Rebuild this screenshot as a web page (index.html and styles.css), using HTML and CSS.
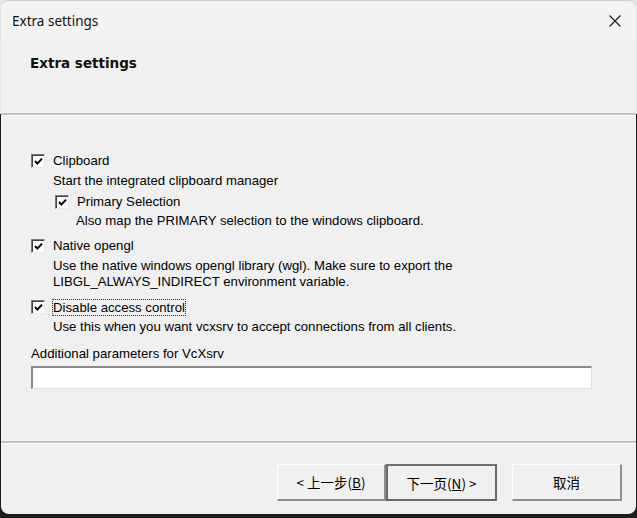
FILE: index.html
```html
<!DOCTYPE html>
<html>
<head>
<meta charset="utf-8">
<link rel="stylesheet" href="styles.css">
</head>
<body>
<div class="window">
  <div class="titlebar">
    <span class="title">Extra settings</span>
    <svg class="close" width="12" height="12" viewBox="0 0 12 12"><path d="M0.5 0.5L11.5 11.5M11.5 0.5L0.5 11.5" stroke="#1a1a1a" stroke-width="1.1" fill="none"/></svg>
  </div>
  <div class="header">Extra settings</div>
  <div class="sep"></div>
  <div class="content">
    <div class="opt first">
      <span class="cb"><svg width="9" height="9" viewBox="0 0 9 9"><path d="M1 4L3.4 6.6L8 1.6" stroke="#000" stroke-width="2" fill="none"/></svg></span>
      <span>Clipboard</span>
    </div>
    <div class="desc">Start the integrated clipboard manager</div>
    <div class="sub">
      <div class="opt nested">
        <span class="cb"><svg width="9" height="9" viewBox="0 0 9 9"><path d="M1 4L3.4 6.6L8 1.6" stroke="#000" stroke-width="2" fill="none"/></svg></span>
        <span>Primary Selection</span>
      </div>
      <div class="desc subdesc">Also map the PRIMARY selection to the windows clipboard.</div>
    </div>
    <div class="opt">
      <span class="cb"><svg width="9" height="9" viewBox="0 0 9 9"><path d="M1 4L3.4 6.6L8 1.6" stroke="#000" stroke-width="2" fill="none"/></svg></span>
      <span>Native opengl</span>
    </div>
    <div class="desc">Use the native windows opengl library (wgl). Make sure to export the<br>LIBGL_ALWAYS_INDIRECT environment variable.</div>
    <div class="opt">
      <span class="cb"><svg width="9" height="9" viewBox="0 0 9 9"><path d="M1 4L3.4 6.6L8 1.6" stroke="#000" stroke-width="2" fill="none"/></svg></span>
      <span class="focus">Disable access control</span>
    </div>
    <div class="desc">Use this when you want vcxsrv to accept connections from all clients.</div>
    <div class="label">Additional parameters for VcXsrv</div>
    <div class="input"></div>
  </div>
  <div class="sep bottom"></div>
  <div class="buttons">
    <div class="btn">&lt; 上一步(<u>B</u>)</div>
    <div class="btn default">下一页(<u>N</u>) &gt;</div>
    <div class="btn cancel">取消</div>
  </div>
</div>
</body>
</html>
```

FILE: styles.css
```css
html, body {
  margin: 0;
  padding: 0;
  width: 637px;
  height: 518px;
  overflow: hidden;
}
body {
  background: linear-gradient(#e4e4e4 0 114px, #1c1c1c 114px);
  font-family: "Liberation Sans", Arial, sans-serif;
  font-size: 13.2px;
  color: #000;
}
.window {
  margin-left: 1px;
  width: 635px;
  height: 513px;
  background: #f0f0f0;
  border-radius: 8px;
  border-top: 1px solid #d0d0d0;
  display: flex;
  flex-direction: column;
  overflow: hidden;
}
.titlebar {
  height: 39px;
  background: #f3f3f3;
  display: flex;
  align-items: center;
  justify-content: space-between;
  padding: 0 15px 0 11px;
}
.title {
  font-family: "Noto Sans", "Open Sans", sans-serif;
  font-size: 13.5px;
  color: #111;
}
.close { display: block; }
.header {
  height: 73px;
  box-sizing: border-box;
  padding: 15px 0 0 29px;
  font-family: "DejaVu Sans", sans-serif;
  font-weight: bold;
  font-size: 13.5px;
  color: #111;
  background: #f0f0f0;
}
.sep {
  height: 2px;
  background: #c2c2c2;
  border-bottom: 1px solid #ffffff;
}
.content {
  flex: 1;
  padding: 37px 0 0 30px;
}
.opt {
  display: flex;
  align-items: center;
  height: 16px;
  line-height: 16px;
  margin-top: 9px;
  gap: 8px;
}
.opt.first { margin-top: 0; }
.opt.nested { margin-top: 5px; }
.cb {
  width: 14px;
  height: 14px;
  box-sizing: border-box;
  background: #fff;
  border-top: 1px solid #7a7a7a;
  border-left: 1px solid #7a7a7a;
  border-right: 1px solid #e8e8e8;
  border-bottom: 1px solid #e8e8e8;
  box-shadow: inset 1px 1px 0 #404040;
  display: flex;
  align-items: center;
  justify-content: center;
  flex: none;
}
.cb svg { display: block; margin: 1px 0 0 1px; }
.desc {
  margin: 4px 0 0 22px;
  line-height: 16px;
}
.sub { margin-left: 24px; }
.subdesc { margin-top: 3px; margin-left: 21px; }
.focus {
  outline: 1px dotted #333;
  outline-offset: 0;
  line-height: 15px;
}
.label {
  margin-top: 11px;
  line-height: 16px;
}
.input {
  margin-top: 4px;
  width: 561px;
  height: 23px;
  box-sizing: border-box;
  background: #fff;
  border-top: 2px solid #8a8a8a;
  border-left: 2px solid #8a8a8a;
  border-right: 1px solid #e0e0e0;
  border-bottom: 1px solid #e0e0e0;
}
.buttons {
  height: 70px;
  box-sizing: border-box;
  display: flex;
  padding: 20px 0 0 276px;
}
.btn {
  width: 109px;
  height: 37px;
  box-sizing: border-box;
  display: flex;
  align-items: center;
  justify-content: center;
  font-family: "Noto Sans CJK SC", "Liberation Sans", sans-serif;
  font-size: 13.5px;
  background: #f0f0f0;
  border-top: 1px solid #ffffff;
  border-left: 1px solid #ffffff;
  border-right: 2px solid #8e8e8e;
  border-bottom: 2px solid #8e8e8e;
}
.btn u { text-underline-offset: 1px; }
.btn.default {
  width: 111px;
  border: 2px solid #6a6a6a;
  border-top-color: #707070;
}
.btn.cancel {
  margin-left: 15px;
  width: 110px;
}
```
